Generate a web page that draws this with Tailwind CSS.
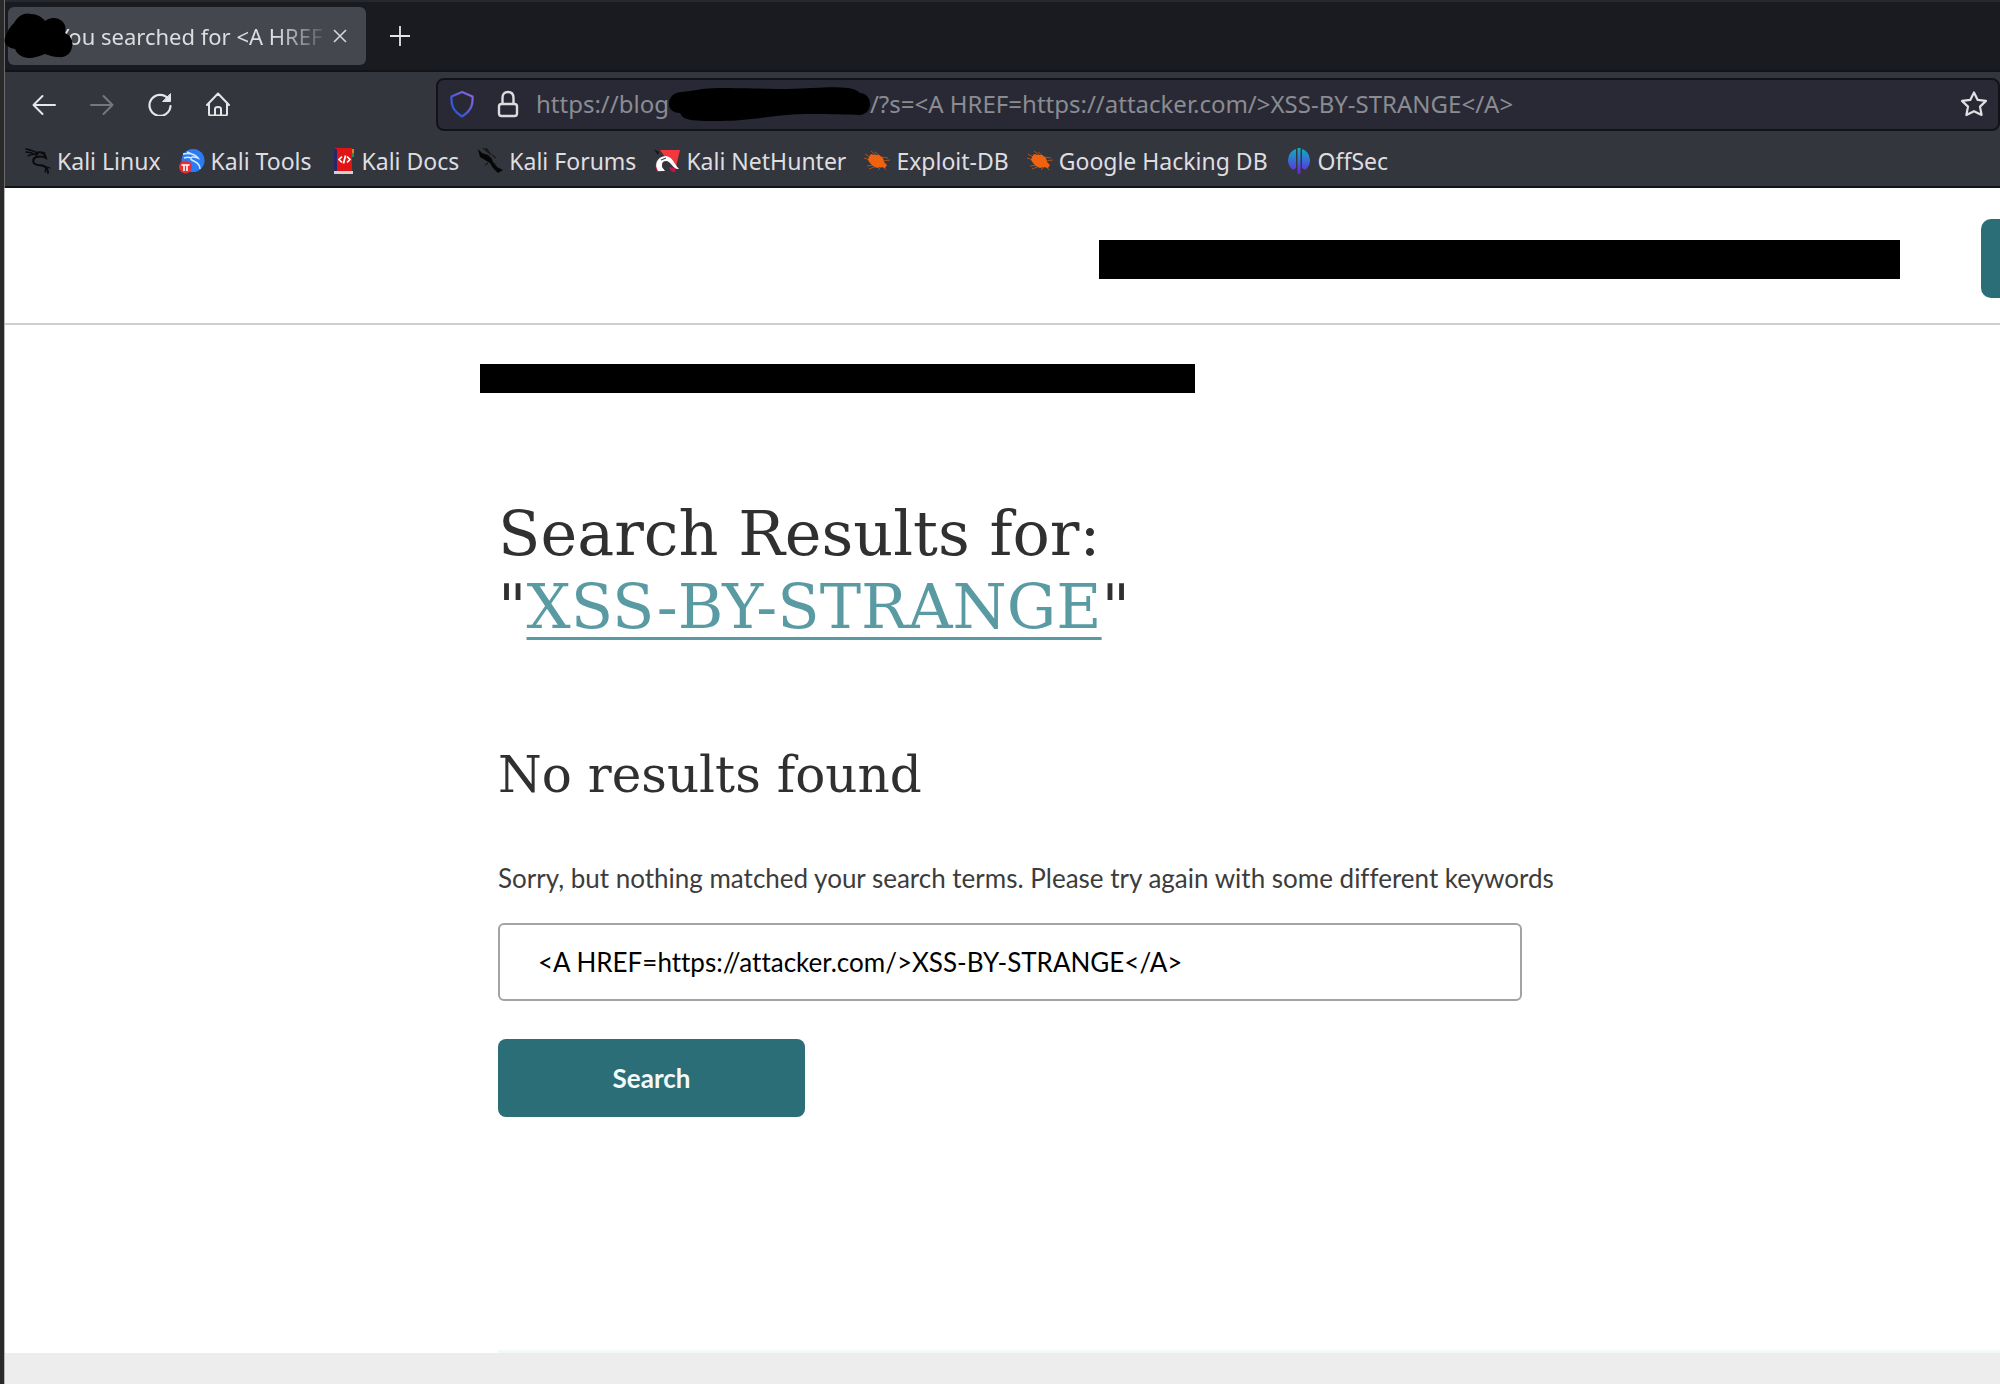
<!DOCTYPE html>
<html lang="en">
<head>
<meta charset="utf-8">
<meta name="viewport" content="width=device-width, initial-scale=1">
<title>You searched for &lt;A HREF</title>
<script src="https://cdn.jsdelivr.net/npm/@tailwindcss/browser@4"></script>
</head>
<body class="flex min-h-screen flex-col overflow-x-hidden border-l-4 border-[#2a2a2a] bg-white font-['Lato',sans-serif]">
<svg class="absolute size-0" aria-hidden="true">
  <defs>
    <linearGradient id="shield" x1="0" y1="1" x2="1" y2="0"><stop offset="0.2" stop-color="#2f57d8"/><stop offset="0.9" stop-color="#8a62e0"/></linearGradient>
    <linearGradient id="offsec" x1="0" y1="0" x2="0" y2="1"><stop offset="0" stop-color="#0fb0c0"/><stop offset="0.5" stop-color="#3a6ad6"/><stop offset="1" stop-color="#6a22d8"/></linearGradient>
    <symbol id="bug" viewBox="0 0 26 26">
      <path d="M7 3l5 4M11 4l5 4M1 6l5 3M0 10l6 2M17 9l7 1M19 13l7-1M10 17l-7 1M13 18l-8 3M17 19l-3 3M18 17l4 5" stroke="#a8521f" stroke-width="1" fill="none"/>
      <path d="M5 9 7 6l4 1 4 0 4 3 1 4 3 3-2 3-4-1-4 1-4-2-3-3-2-3z" fill="#f0620f"/>
    </symbol>
  </defs>
</svg>

<header class="border-l border-[#6b6b6e] font-['Noto_Sans',sans-serif] text-[23px] leading-[30px] text-[#dedee0]">
  <!-- Tab strip -->
  <div class="flex h-[72px] items-center border-t-2 border-b-2 border-t-[#27282d] border-b-[#121318] bg-[#1a1b20] pl-[3px]">
    <div class="relative flex h-[58px] w-[358px] items-center rounded-md bg-[#45474e] pr-4 pl-[49px]">
      <span class="flex-1 text-[22px] whitespace-nowrap mask-r-from-80% mask-r-to-100%">You searched for &lt;A HREF</span>
      <button aria-label="Close tab" class="flex size-5 items-center justify-center">
        <svg class="size-5" viewBox="0 0 20 20" stroke="#d6d6d8" stroke-width="1.6" fill="none"><path d="M4 4l12 12M16 4L4 16"/></svg>
      </button>
      <svg class="absolute top-[5px] -left-[4px] h-[48px] w-[70px]" viewBox="0 0 70 48"><path d="M1 26C3 19 6 15 10 11 14 4 20 0 27 2c6 0 11 3 14 7 5-4 12-4 17 0 4 4 4 8 3 12 5 2 9 8 7 14-1 7-7 11-14 10-5 0-9-2-13-3-6 2-10 4-17 4-7-1-11-4-13-9C4 36-1 32 1 26z"/></svg>
    </div>
    <button aria-label="New tab" class="ml-[22px] flex size-6 items-center justify-center">
      <svg class="size-5" viewBox="0 0 20 20" stroke="#e4e4e6" stroke-width="1.8" fill="none"><path d="M10 0v20M0 10h20"/></svg>
    </button>
  </div>

  <!-- Navigation bar -->
  <div class="flex h-[64px] items-center bg-[#34363e] pl-[27px]">
    <nav class="flex w-[404px] shrink-0 items-center gap-[34px]" aria-label="Navigation">
      <button aria-label="Back"><svg class="size-6" viewBox="0 0 24 24" stroke="#e6e6e8" stroke-width="2" fill="none" stroke-linecap="round" stroke-linejoin="round"><path d="M23 13H1.500M10.500 4l-9 9 9 9"/></svg></button>
      <button aria-label="Forward"><svg class="size-6" viewBox="0 0 24 24" stroke="#77787e" stroke-width="2" fill="none" stroke-linecap="round" stroke-linejoin="round"><path d="M1 13h21.500M13.500 4l9 9-9 9"/></svg></button>
      <button aria-label="Reload"><svg class="size-6" viewBox="0 0 24 24" stroke="#e6e6e8" stroke-width="2.200" fill="none" stroke-linecap="round"><path d="M20 6.500A10.500 10.500 0 1 0 22.500 14"/><path d="M22.500 2v7.500H15z" fill="#e6e6e8" stroke-width="1" stroke-linejoin="round"/></svg></button>
      <button aria-label="Home"><svg class="size-6" viewBox="0 0 24 24" stroke="#e6e6e8" stroke-width="2" fill="none" stroke-linecap="round" stroke-linejoin="round"><path d="M1 13 12 1.500 23 13M3 11.500V22q0 1.500 1.500 1.500h15q1.500 0 1.500-1.500V11.500M9 23.500V17q0-2 3-2t3 2v6.500"/></svg></button>
    </nav>
    <div class="flex h-[53px] flex-1 items-center rounded-lg border-2 border-[#121318] bg-[#282935] pr-[10px] pl-3">
      <svg class="h-7 w-6" viewBox="0 0 24 28" fill="none" stroke="url(#shield)" stroke-width="2.200" stroke-linejoin="round"><path d="M12 2 22.500 6.500c.6 8-1 14-10.500 20C2.500 20.500.9 14.500 1.500 6.500z"/></svg>
      <svg class="ml-[22px] h-7 w-6" viewBox="0 0 24 28" fill="none" stroke="#dcdcde" stroke-width="2.400"><rect x="3" y="14" width="18" height="12" rx="2.500"/><path d="M6.500 14V8q0-6 5.500-6t5.500 6v6"/></svg>
      <div class="ml-4 flex flex-1 items-center text-[24px] whitespace-nowrap text-[#8b8c92]">
        <span>https://blog</span>
        <svg class="-ml-px h-[34px] w-[202px]" viewBox="0 0 202 34"><path d="M1 17C1 9 7 5 14 5 26 4 34 1 50 1c26 0 44 1 70 1C145 1 165-1 180 1q8 1 12 5c6 0 10 5 10 11 0 7-5 11-11 11-15 0-50-2-72 0-24 2-40 6-66 6-15 0-28 0-34-2-4-1-6-4-7-6C5 26 1 22 1 17z" fill="#000"/></svg>
        <span>/?s=&lt;A HREF=https://attacker.com/&gt;XSS-BY-STRANGE&lt;/A&gt;</span>
      </div>
      <button aria-label="Bookmark this page"><svg class="size-7" viewBox="0 0 28 28" fill="none" stroke="#e0e0e2" stroke-width="2.200" stroke-linejoin="round"><path d="M14 2.500l3.600 7.300 8.400 1.100-6 5.700 1.600 8.400L14 21.200 6.400 25 8 16.600 2 10.900l8.400-1.100z"/></svg></button>
    </div>
  </div>

  <!-- Bookmarks bar -->
  <nav class="flex h-[52px] items-center gap-[18px] border-b-2 border-[#121318] bg-[#34363e] pl-5 whitespace-nowrap" aria-label="Bookmarks">
    <a href="#" class="flex items-center gap-[6px]"><svg class="size-[26px]" viewBox="0 0 26 26" fill="none" stroke="#0b0b0d" stroke-linecap="round"><path d="M1 1c5 1 9 2 12 5M1 4c4 0 7 1 10 3M3 8c3-2 6-2 9-1" stroke-width="1.500"/><path d="M11 5c4-2 9 0 10 5-3-2-6-2-10-1-4 2-4 7 2 8 6 0 10 2 10 8" stroke-width="2"/><path d="M17 4l3 1M19 18l6 2M21 20l-1 4" stroke-width="1.300"/></svg>Kali Linux</a>
    <a href="#" class="flex items-center gap-[6px]"><svg class="size-[26px]" viewBox="0 0 26 26"><circle cx="14" cy="12.500" r="11.500" fill="#2a7cf4"/><path d="M4 6c6-1 12 0 15 4-5-2-8-1-7 1 1 3 9 2 9 10M5 10c3-1 5-1 7 0M8 4l7 3" fill="none" stroke="#dbe9ff" stroke-width="1.500"/><circle cx="6.500" cy="19" r="6.500" fill="#e62e34"/><path d="M2.500 17h8M5 17v6M8 17v6" stroke="#fff" stroke-width="1.600"/></svg>Kali Tools</a>
    <a href="#" class="flex items-center gap-[6px]"><svg class="size-[26px]" viewBox="-3 0 26 26"><path d="M2 0h17v23H2z" fill="#e01414"/><path d="M1 1h3v22H1z" fill="#26266a"/><path d="M1 23h19v3H1z" fill="#d8d0d0"/><path d="M19 1h2v4h-2z" fill="#e77a22"/><path d="M19 5h2v4h-2z" fill="#2a8b64"/><path d="M9 8.500 6 11.500l3 3M14 8.500l3 3-3 3M12.500 7.500l-2 8" stroke="#fff" stroke-width="1.700" fill="none"/></svg>Kali Docs</a>
    <a href="#" class="flex items-center gap-[6px]"><svg class="size-[26px]" viewBox="0 0 26 26"><path d="M1 1l4 4 6 2 4 4 1 3 4 5 6 3-5 3-5-5-3-5-5-3-5-3z" fill="#060607"/><path d="M6 0l6 5M9 0l5 7M15 7l4 3M11 15l-3 2M17 15l2 3" stroke="#17181b" stroke-width="1.300"/></svg>Kali Forums</a>
    <a href="#" class="flex items-center gap-[6px]"><svg class="size-[26px]" viewBox="0 0 26 26"><path d="M6 2h20l-4 17-8-6z" fill="#f2383d"/><path d="M1 17l2 7h5l-3-6zM14 19l4 5h3l1-4z" fill="#c41440"/><path d="M4 23C-1 15 5 8 12 8c7 1 8 8 13 13-6 1-8-8-13-8-5 0-5 5-1 10z" fill="#fff"/><path d="M8 17c1-3 6-3 7 0 1 2 0 4-3 4s-4-1-4-4z" fill="#34363e"/><path d="M7 12l5-2" stroke="#444" stroke-width="1.200"/><path d="M0 1l5 3-1 3z" fill="#191015"/></svg>Kali NetHunter</a>
    <a href="#" class="flex items-center gap-[6px]"><svg class="size-[26px]"><use href="#bug"/></svg>Exploit-DB</a>
    <a href="#" class="flex items-center gap-[6px]"><svg class="size-[26px]"><use href="#bug"/></svg>Google Hacking DB</a>
    <a href="#" class="flex items-center gap-[6px]"><svg class="size-[26px]" viewBox="0 0 26 26"><path d="M10 1v19L7 22Q2 18 2 12 3 3 10 1zM16 1v19l3 2q5-4 5-10-1-9-8-11zM11.500 0h3v26h-3z" fill="url(#offsec)"/></svg>OffSec</a>
  </nav>
</header>

<div class="flex flex-1 flex-col border-l border-[#b5b5b5]">
  <!-- Site header -->
  <div class="flex h-[137px] items-center justify-end border-b-2 border-[#cfcfcf] pt-[5px]">
    <div class="mt-[3px] h-[39px] w-[801px] bg-black"></div>
    <div class="ml-[81px] h-[79px] w-[19px] rounded-l-[10px] bg-[#2c6e77]"></div>
  </div>

  <main class="w-full flex-1 pl-[493px]">
    <div class="mt-[39px] -ml-[18px] h-[29px] w-[715px] bg-black"></div>
    <h1 class="mt-[104px] font-['DejaVu_Serif',serif] text-[62px] leading-[73px] text-[#303030]">Search Results for:<br>"<a href="https://attacker.com/" class="text-[#5a9ba3] underline decoration-[3px] underline-offset-[9px]">XSS-BY-STRANGE</a>"</h1>
    <h2 class="mt-[100px] font-['DejaVu_Serif',serif] text-[50px] leading-[64px] text-[#303030]">No results found</h2>
    <form class="mt-[49px] [font-variant-ligatures:none]" onsubmit="return false">
      <label for="s" class="block text-[26px] leading-[44px] text-[#3c3c3c]">Sorry, but nothing matched your search terms. Please try again with some different keywords</label>
      <input id="s" type="text" value="&lt;A HREF=https://attacker.com/&gt;XSS-BY-STRANGE&lt;/A&gt;" class="mt-[23px] block h-[78px] w-[1024px] rounded-md border-2 border-[#a3a3a3] bg-white px-[38px] text-[26px] text-black [font-variant-ligatures:none]">
      <button type="submit" class="mt-[38px] block h-[78px] w-[307px] rounded-lg bg-[#2c6e77] text-[26px] font-bold text-[#f4fafa]">Search</button>
    </form>
  </main>

  <div class="ml-[493px] h-[3px] bg-[#f1f9f9]"></div>
  <footer class="h-[31px] bg-[#ededed]"></footer>
</div>
</body>
</html>
